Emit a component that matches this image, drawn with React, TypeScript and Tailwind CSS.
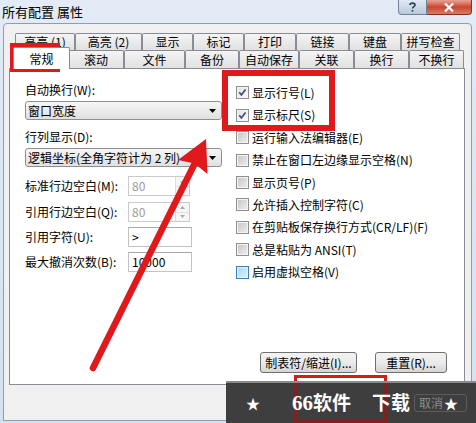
import React from "react";

const row1 = [
  { label: "高亮 (1)", cls: "w-[60px]" },
  { label: "高亮 (2)", cls: "w-[67px]" },
  { label: "显示", cls: "w-[51px]" },
  { label: "标记", cls: "w-[51px]" },
  { label: "打印", cls: "w-[52px]" },
  { label: "链接", cls: "w-[53px]" },
  { label: "键盘", cls: "w-[52px]" },
  { label: "拼写检查", cls: "w-[59px]" },
];

const row2 = [
  { label: "滚动", cls: "w-[56px]" },
  { label: "文件", cls: "w-[61px]" },
  { label: "备份", cls: "w-[54px]" },
  { label: "自动保存", cls: "w-[60px]" },
  { label: "关联", cls: "w-[55px]" },
  { label: "换行", cls: "w-[55px]" },
  { label: "不换行", cls: "w-[55px]" },
];

const checks = [
  { label: "显示行号(L)", checked: true },
  { label: "显示标尺(S)", checked: true },
  { label: "运行输入法编辑器(E)" },
  { label: "禁止在窗口左边缘显示空格(N)" },
  { label: "显示页号(P)" },
  { label: "允许插入控制字符(C)" },
  { label: "在剪贴板保存换行方式(CR/LF)(F)" },
  { label: "总是粘贴为 ANSI(T)" },
  { label: "启用虚拟空格(V)", hover: true },
];

function Tab({ label, cls }: { label: string; cls: string }) {
  return (
    <div
      className={`${cls} flex h-full shrink-0 items-center justify-center rounded-t-[2px] border border-b-0 border-[#898c95] bg-gradient-to-b from-[#f4f4f4] to-[#e1e1e1] text-[12px] leading-none`}
    >
      {label}
    </div>
  );
}

function Check({ checked, hover }: { checked?: boolean; hover?: boolean }) {
  return (
    <div
      className={`relative flex h-[13px] w-[13px] shrink-0 items-center justify-center border ${
        hover ? "border-[#3c7fb1] bg-[#e3f4fc]" : "border-[#8e8f8f] bg-[#f4f4f4]"
      }`}
    >
      <div
        className={`h-[9px] w-[9px] ${
          hover
            ? "bg-gradient-to-br from-[#aadcf2] to-[#d6f0fb]"
            : checked
            ? "bg-gradient-to-br from-[#e4e4e4] to-[#fafafa]"
            : "bg-gradient-to-br from-[#c9c9c9] to-[#ececec]"
        }`}
      />
      {checked && (
        <svg className="absolute left-0 top-0" width="11" height="11" viewBox="0 0 11 11">
          <path d="M2.2 5.2 L4.4 7.8 L8.6 2.4" fill="none" stroke="#3f4f77" strokeWidth="1.7" />
        </svg>
      )}
    </div>
  );
}

function Dropdown({ text, className }: { text: string; className: string }) {
  return (
    <div
      className={`${className} flex h-[19px] w-[197px] items-center justify-between rounded-[3px] border border-[#8e8f8f] bg-gradient-to-b from-[#f7f7f7] to-[#e0e0e0] pl-[2px] pr-[5px] text-[12px] leading-none`}
    >
      <span>{text}</span>
      <svg width="7" height="4" viewBox="0 0 7 4">
        <path d="M0 0H7L3.5 4Z" fill="#000" />
      </svg>
    </div>
  );
}

function Spin() {
  return (
    <div className="flex h-[20px] w-[62px] border border-[#cbcbcb] bg-white">
      <div className="flex-1 pl-[3px] text-[12px] leading-[18px] text-[#9b9b9b]">80</div>
      <div className="flex w-[14px] flex-col border-l border-[#dcdcdc]">
        <div className="flex flex-1 items-center justify-center border-b border-[#e2e2e2] bg-[#f6f6f6]">
          <svg width="5" height="3" viewBox="0 0 5 3">
            <path d="M0 3H5L2.5 0Z" fill="#a8a8a8" />
          </svg>
        </div>
        <div className="flex flex-1 items-center justify-center bg-[#f6f6f6]">
          <svg width="5" height="3" viewBox="0 0 5 3">
            <path d="M0 0H5L2.5 3Z" fill="#a8a8a8" />
          </svg>
        </div>
      </div>
    </div>
  );
}

function TextBox({ value }: { value: string }) {
  return (
    <div className="h-[20px] w-[64px] border border-[#c3c3c3] border-t-[#a9a9a9] bg-white pl-[3px] text-[12px] leading-[18px]">
      {value}
    </div>
  );
}

function Row({ label, children, className }: { label: string; children: React.ReactNode; className: string }) {
  return (
    <div className={`${className} flex h-[20px] items-center`}>
      <div className="w-[103px] text-[12px] leading-[16px]">{label}</div>
      {children}
    </div>
  );
}

function Btn({ text, cls }: { text: string; cls: string }) {
  return (
    <div
      className={`${cls} flex h-[21px] items-center justify-center rounded-[3px] border border-[#707070] bg-gradient-to-b from-[#f3f3f3] via-[#ebebeb] to-[#d5d5d5] text-[12px] leading-none`}
    >
      {text}
    </div>
  );
}

export default function App() {
  return (
    <div className="relative h-[423px] w-[476px] overflow-hidden bg-gradient-to-b from-[#e2ebf6] to-[#d3e1f1] font-['Noto_Sans_CJK_SC','Noto_Sans',sans-serif] text-black">
      {/* title bar */}
      <div className="flex h-[23px] justify-between">
        <div className="pl-[2px] pt-[3px] text-[13px] leading-[17px]">所有配置 属性</div>
        <div className="mr-[4px] flex h-[15px]">
          <div className="flex w-[29px] items-center justify-center rounded-bl-[4px] border border-t-0 border-[#71839b] bg-gradient-to-b from-[#e1e9f3] to-[#b9c9dd]">
            <svg width="7" height="10" viewBox="0 0 7 10">
              <path d="M1 3 C1 0.5 6 0.5 6 3 C6 4.8 3.5 4.6 3.5 6.6" fill="none" stroke="#2d3e58" strokeWidth="1.6" />
              <rect x="2.7" y="8" width="1.6" height="1.6" fill="#2d3e58" />
            </svg>
          </div>
          <div className="flex w-[45px] items-center justify-center rounded-br-[4px] border border-l-0 border-t-0 border-[#84311f] bg-gradient-to-b from-[#e6a495] via-[#c9452f] to-[#dc7a62]">
            <svg width="10" height="9" viewBox="0 0 10 9">
              <path d="M1 0.5 L9 8.5 M9 0.5 L1 8.5" stroke="#ffffff" strokeWidth="2.2" />
            </svg>
          </div>
        </div>
      </div>

      {/* client area */}
      <div className="ml-[3px] flex h-[398px] w-[469px] flex-col rounded-t-[4px] border border-[#8d9db3] bg-[#f0f0f0]">
        <div className="ml-[11px] mt-[9px] flex h-[17px]">
          {row1.map((t) => (
            <Tab key={t.label} label={t.label} cls={t.cls} />
          ))}
        </div>
        <div className="relative z-10 ml-[11px] flex h-[18px]">
          <div className="relative w-[53px] shrink-0">
            <div className="absolute left-[-2px] top-[-3px] flex h-[22px] w-[57px] items-center justify-center rounded-t-[2px] border border-b-0 border-[#898c95] bg-white text-[12px] leading-none">
              常规
            </div>
          </div>
          {row2.map((t) => (
            <Tab key={t.label} label={t.label} cls={t.cls} />
          ))}
        </div>

        {/* panel */}
        <div className="ml-[5px] flex h-[317px] w-[456px] flex-col border border-[#898c95] bg-white">
          <div className="flex">
            <div className="flex w-[226px] flex-col pl-[15px] pt-[13px]">
              <div className="h-[16px] text-[12px] leading-[16px]">自动换行(W):</div>
              <Dropdown className="mt-[3px]" text="窗口宽度" />
              <div className="mt-[9px] h-[16px] text-[12px] leading-[16px]">行列显示(D):</div>
              <Dropdown className="mt-[3px]" text="逻辑坐标(全角字符计为 2 列)" />
              <Row className="mt-[9px]" label="标准行边空白(M):">
                <Spin />
              </Row>
              <Row className="mt-[6px]" label="引用行边空白(Q):">
                <Spin />
              </Row>
              <Row className="mt-[5px]" label="引用字符(U):">
                <TextBox value=">" />
              </Row>
              <Row className="mt-[5px]" label="最大撤消次数(B):">
                <TextBox value="10000" />
              </Row>
            </div>
            <div className="flex flex-col pt-[12.8px]">
              {checks.map((c) => (
                <div key={c.label} className="flex h-[22.4px] items-center gap-[3px]">
                  <Check checked={c.checked} hover={c.hover} />
                  <span className="text-[12px] leading-[16px]">{c.label}</span>
                </div>
              ))}
            </div>
          </div>
          <div className="mb-[11px] mt-auto flex justify-end gap-[18px] pr-[17px]">
            <Btn text="制表符/缩进(I)..." cls="w-[97px]" />
            <Btn text="重置(R)..." cls="w-[72px]" />
          </div>
        </div>
        <div className="flex-1" />
      </div>

      {/* annotations */}
      <div className="absolute left-[10px] top-[43px] h-[29px] w-[50px] border-[6px] border-[#e01a1c]" />
      <div className="absolute left-[222px] top-[70px] h-[61px] w-[113px] border-[6px] border-[#e01a1c]" />
      <svg className="pointer-events-none absolute left-0 top-0" width="476" height="423" viewBox="0 0 476 423">
        <line x1="93" y1="368" x2="194" y2="165" stroke="#e01a1c" strokeWidth="6.5" strokeLinecap="round" />
        <polygon points="206,139 207.5,174 194.5,163.5 178,160" fill="#e01a1c" />
      </svg>

      {/* watermark banner */}
      <div className="absolute left-[294px] top-[375px] h-[48px] w-[93px] border-[3px] border-[#d41c1c]" />
      <div className="absolute left-[226px] top-[381px] flex h-[42px] w-[250px] items-center border-t-[2px] border-[#8a8a8a] bg-[#3e3e3e]">
        <div className="absolute left-[68px] top-0 h-full w-[93px] border-x-[3px] border-b-[3px] border-[#7d2121]" />
        <span className="relative ml-[20px] w-[13px] text-[14px] leading-none text-white">★</span>
        <span className="relative ml-[33px] flex items-baseline text-[19px] font-bold leading-none text-white">
          <span className="font-['Liberation_Serif',serif] text-[21px]">66</span>
          <span>软件</span>
          <span className="ml-[21px]">下载</span>
        </span>
        <div className="relative ml-[4px] flex h-[18px] w-[53px] items-center rounded-[3px] border border-[#5c5c5c] pl-[4px] text-[12px] leading-none text-[#8c8c8c]">
          取消
          <span className="absolute left-[29px] top-[1px] text-[14px] leading-none text-white">★</span>
        </div>
      </div>
    </div>
  );
}
